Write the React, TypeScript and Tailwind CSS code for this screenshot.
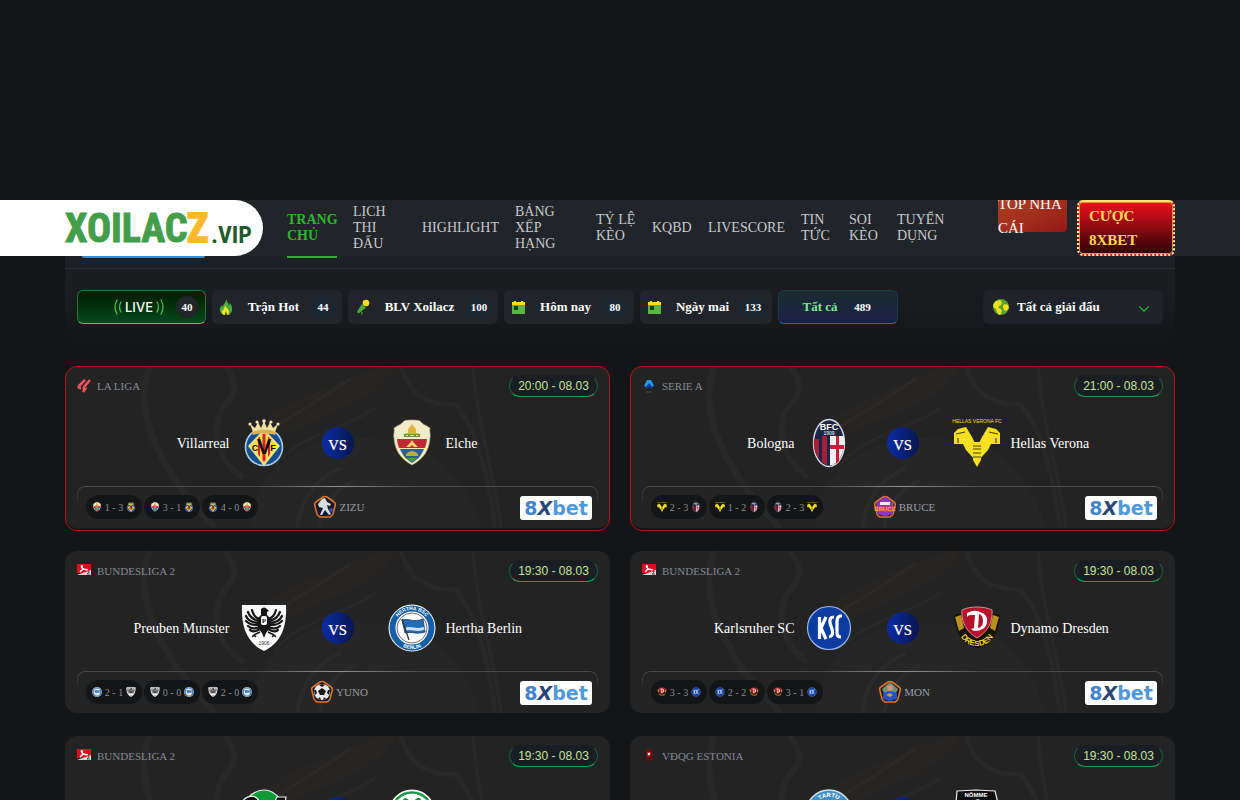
import React from "react";
import { ChevronDown } from "lucide-react";

type TeamKey =
  | "villarreal"
  | "elche"
  | "bologna"
  | "verona"
  | "preuben"
  | "hertha"
  | "karlsruher"
  | "dresden"
  | "hannover"
  | "furth"
  | "tartu"
  | "kalju";

type LeagueKey = "laliga" | "seriea" | "bundesliga" | "estonia";

interface Head2Head {
  left: TeamKey;
  score: string;
  right: TeamKey;
}

interface Match {
  league: string;
  leagueKey: LeagueKey;
  time: string;
  home: string;
  homeKey: TeamKey;
  away: string;
  awayKey: TeamKey;
  commentator: string;
  hot?: boolean;
  h2h: Head2Head[];
}

const navItems = [
  { label: "Trang chủ", width: "w-[50px]", active: true },
  { label: "Lịch thi đấu", width: "w-[53px]" },
  { label: "Highlight", width: "w-[77px]" },
  { label: "Bảng xếp hạng", width: "w-[65px]" },
  { label: "Tỷ lệ kèo", width: "w-10" },
  { label: "KQBD", width: "w-10" },
  { label: "Livescore", width: "w-[77px]" },
  { label: "Tin tức", width: "w-8" },
  { label: "Soi kèo", width: "w-8" },
  { label: "Tuyển dụng", width: "w-[53px]" },
];

const matches: Match[] = [
  {
    league: "LA LIGA",
    leagueKey: "laliga",
    time: "20:00 - 08.03",
    home: "Villarreal",
    homeKey: "villarreal",
    away: "Elche",
    awayKey: "elche",
    commentator: "ZIZU",
    hot: true,
    h2h: [
      { left: "elche", score: "1 - 3", right: "villarreal" },
      { left: "elche", score: "3 - 1", right: "villarreal" },
      { left: "villarreal", score: "4 - 0", right: "elche" },
    ],
  },
  {
    league: "SERIE A",
    leagueKey: "seriea",
    time: "21:00 - 08.03",
    home: "Bologna",
    homeKey: "bologna",
    away: "Hellas Verona",
    awayKey: "verona",
    commentator: "BRUCE",
    hot: true,
    h2h: [
      { left: "verona", score: "2 - 3", right: "bologna" },
      { left: "verona", score: "1 - 2", right: "bologna" },
      { left: "bologna", score: "2 - 3", right: "verona" },
    ],
  },
  {
    league: "BUNDESLIGA 2",
    leagueKey: "bundesliga",
    time: "19:30 - 08.03",
    home: "Preuben Munster",
    homeKey: "preuben",
    away: "Hertha Berlin",
    awayKey: "hertha",
    commentator: "YUNO",
    h2h: [
      { left: "hertha", score: "2 - 1", right: "preuben" },
      { left: "preuben", score: "0 - 0", right: "hertha" },
      { left: "preuben", score: "2 - 0", right: "hertha" },
    ],
  },
  {
    league: "BUNDESLIGA 2",
    leagueKey: "bundesliga",
    time: "19:30 - 08.03",
    home: "Karlsruher SC",
    homeKey: "karlsruher",
    away: "Dynamo Dresden",
    awayKey: "dresden",
    commentator: "MON",
    h2h: [
      { left: "dresden", score: "3 - 3", right: "karlsruher" },
      { left: "karlsruher", score: "2 - 2", right: "dresden" },
      { left: "dresden", score: "3 - 1", right: "karlsruher" },
    ],
  },
  {
    league: "BUNDESLIGA 2",
    leagueKey: "bundesliga",
    time: "19:30 - 08.03",
    home: "Hannover 96",
    homeKey: "hannover",
    away: "Greuther Furth",
    awayKey: "furth",
    commentator: "YUNO",
    h2h: [],
  },
  {
    league: "VĐQG ESTONIA",
    leagueKey: "estonia",
    time: "19:30 - 08.03",
    home: "Tartu Tammeka",
    homeKey: "tartu",
    away: "Nomme Kalju",
    awayKey: "kalju",
    commentator: "MON",
    h2h: [],
  },
];

// Club crests, all drawn on a 48x48 board
const crests: Record<TeamKey, React.ReactNode> = {
  villarreal: (
    <>
      <circle cx="24" cy="28" r="18.500" fill="#14508f" stroke="#a9c9e4" strokeWidth="1.600" />
      <path d="M24 10 40 27 24 47 8 27Z" fill="#f6e08a" />
      <path d="M24 12 37 27 24 44 11 27Z" fill="#fbd94a" />
      <path d="M18 19v16l2 3V18zM22.500 15v26l1.500 2 1.500-2V15zM28 18v20l2-3V19z" fill="#d2232f" />
      <path d="M12 13c6-3 18-3 24 0l-1 3c-6-2-16-2-22 0z" fill="#d9b24a" />
      <path d="M13 13L10 5l5 4 3-6 3 6 3-7 3 7 3-6 3 6 5-4-3 8c-6-3-16-3-22 0z" fill="#efe09c" />
      <g fill="#f5eab4">
        <circle cx="10" cy="5" r="1.600" />
        <circle cx="17" cy="3" r="1.600" />
        <circle cx="24" cy="2" r="1.800" />
        <circle cx="31" cy="3" r="1.600" />
        <circle cx="38" cy="5" r="1.600" />
      </g>
      <g fontFamily="Liberation Sans, sans-serif" fontWeight="700" fill="#101010" textAnchor="middle">
        <text x="24" y="35" fontSize="22">V</text>
        <text x="15" y="32" fontSize="9">C</text>
        <text x="33" y="32" fontSize="9">F</text>
      </g>
    </>
  ),
  elche: (
    <>
      <path d="M24 1c3 0 6 0 8 1 3 4 6 4 10 7-1 4 1 6 0 10-1 13-7 21-18 27C13 40 7 32 6 19 5 15 7 13 6 9c4-3 7-3 10-7 2-1 5-1 8-1z" fill="#f1ebca" stroke="#b8a878" strokeWidth="0.600" />
      <path d="M17 14h3v-4l4-5 4 5v4h3v2H17z" fill="#dcb43a" />
      <path d="M16 15h16v3H16z" fill="#7a8c3c" />
      <path d="M18 16h2v1h-2zM22 16h4v1h-4zM28 16h2v1h-2z" fill="#e8dfa0" />
      <path d="M9 20h30c0 3-1 6-2 9H11c-1-3-2-6-2-9z" fill="#c22a33" />
      <path d="M12 30h24c-3 7-6 10-12 14-6-4-9-7-12-14z" fill="#2e5c94" />
      <path d="M24 21l2 3 4 4h-4l-2-2-2 2h-4l4-4z" fill="#efcf6e" />
      <path d="M18 35q6-6 12 0v2H18z" fill="#b5b03a" />
      <path d="M19 39h10l-5 4z" fill="#4d9a4a" />
    </>
  ),
  bologna: (
    <>
      <ellipse cx="24" cy="24" rx="15.500" ry="23.500" fill="#1d2745" stroke="#d9dce4" strokeWidth="1.400" />
      <path d="M9 20h5v20c-4-5-6-12-5-20z" fill="#a61f38" />
      <path d="M17 17h5v29l-5-3z" fill="#a61f38" />
      <path d="M25 17h14c1 12-2 24-11 29h-3z" fill="#f2f2f4" />
      <path d="M31 17h3v25l-3 3z" fill="#c5203a" />
      <path d="M25 26h14v4H25z" fill="#c5203a" />
      <text x="24" y="11" textAnchor="middle" fontSize="9" fontWeight="700" fontFamily="Liberation Sans, sans-serif" fill="#fff">BFC</text>
      <text x="24" y="16" textAnchor="middle" fontSize="5" fontFamily="Liberation Sans, sans-serif" fill="#fff">1909</text>
    </>
  ),
  verona: (
    <>
      <text x="24" y="4" textAnchor="middle" fontSize="5" fontFamily="Liberation Sans, sans-serif" fill="#f4dc22">HELLAS VERONA FC</text>
      <path d="M13 8l6 10 3 6v17l-9-10-3-6H1V14l4-4z" fill="#f6e01f" />
      <path d="M35 8l-6 10-3 6v17l9-10 3-6h9V14l-4-4z" fill="#f6e01f" />
      <path d="M20 23h8v18l-4 7-4-7z" fill="#f6e01f" />
      <path d="M20 27h8M20 30h8M20 34h8M20 38h8M3 15l9-2M36 13l9 2M5 19v5M43 19v5" stroke="#4a4410" strokeWidth="1.200" />
    </>
  ),
  preuben: (
    <>
      <path d="M2 1h44c1 22-5 38-22 46C7 39 1 23 2 1z" fill="#fbfbfb" />
      {/* eagle: body, feathers, talons */}
      <path d="M21 5q3-3 6 0l2 2-2 1v3l3 3q2 9-4 15l-2 5-2-5q-6-6-4-15l3-3V8z" fill="#161616" />
      <g fill="none" stroke="#161616" strokeWidth="2.200" strokeLinecap="round">
        <path d="M20 15Q14 14 12 6M20 17Q11 16 8 8M20 19Q9 19 6 12M20 21Q11 22 6 17M20 23Q12 26 8 22M20 25Q14 29 10 26" />
        <path d="M28 15Q34 14 36 6M28 17Q37 16 40 8M28 19Q39 19 42 12M28 21Q37 22 42 17M28 23Q36 26 40 22M28 25Q34 29 38 26" />
      </g>
      <path d="M20 28l-6 3M28 28l6 3M14 31l-2 2M14 31l2 2M34 31l2 2M34 31l-2 2" stroke="#161616" strokeWidth="1.600" />
      <rect x="21" y="12" width="6" height="9" rx="2" fill="#fff" />
      <text x="24" y="19" textAnchor="middle" fontSize="7" fontWeight="700" fontFamily="Liberation Serif, serif" fill="#161616">P</text>
      <text x="24" y="41" textAnchor="middle" fontSize="5" fontFamily="Liberation Sans, sans-serif" fill="#333">1906</text>
    </>
  ),
  hertha: (
    <>
      <circle cx="24" cy="24" r="23.500" fill="#fff" />
      <circle cx="24" cy="24" r="19.500" fill="none" stroke="#135fa8" strokeWidth="6" />
      <path id="hertha-top" d="M6 24a18 18 0 0 1 36 0" fill="none" />
      <path id="hertha-bottom" d="M3 24a21 21 0 0 0 42 0" fill="none" />
      <text fontSize="5" fontWeight="700" fontFamily="Liberation Sans, sans-serif" fill="#fff">
        <textPath href="#hertha-top" startOffset="50%" textAnchor="middle">HERTHA BSC</textPath>
      </text>
      <text fontSize="5" fontWeight="700" fontFamily="Liberation Sans, sans-serif" fill="#fff">
        <textPath href="#hertha-bottom" startOffset="50%" textAnchor="middle">BERLIN</textPath>
      </text>
      <circle cx="24" cy="24" r="15" fill="none" stroke="#444" strokeWidth="0.800" />
      <path d="M14 16c7-2 11 3 21-1l2 13c-9 3-12-1-20 1z" fill="#1f6db6" stroke="#183f66" strokeWidth="0.800" />
      <path d="M18 25c7-2 11 3 18-1" stroke="#cfe0f2" strokeWidth="3" fill="none" />
      <path d="M14 15l7 21" stroke="#333" strokeWidth="1.300" />
    </>
  ),
  karlsruher: (
    <>
      <circle cx="24" cy="24" r="21.500" fill="#0b3da0" stroke="#9db9ee" strokeWidth="1.200" />
      <g fill="none" stroke="#fff" strokeWidth="3.200">
        <path d="M14.500 13v22M21 13l-5 11 5 11" />
        <path d="M29 13q-5 0-4 6l2 6q2 7-3 8" />
        <path d="M37 12h-2q-3 1-3 5v12q0 4 4 4" />
      </g>
    </>
  ),
  dresden: (
    <>
      <path d="M1 11l8-2 3 14 12 8 12-8 3-14 8 2c-1 17-7 26-16 31q-7 4-14 0C8 37 2 28 1 11z" fill="#171310" />
      <path d="M2 13l6-2 3 13-5 3zM46 13l-6-2-3 13 5 3z" fill="#b98f1e" />
      <path d="M24 3c6 0 11 1 15 3 1 13-5 22-15 28C14 28 8 19 9 6c4-2 9-3 15-3z" fill="#b3122a" stroke="#e8868f" strokeWidth="1" />
      <path d="M14 9q8-4 13-1 9 3 7 11-2 8-13 8l-3-2 3-1 1-13h-4q-3 0-4 2zM26 10l-1 14q5-1 5-7t-4-7z" fill="#fff" fillRule="evenodd" />
      <path id="dresden-arc" d="M4 23q5 19 20 19t20-19" fill="none" />
      <text fontSize="8" fontWeight="700" fontFamily="Liberation Sans, sans-serif" fill="#e9cf2f">
        <textPath href="#dresden-arc" startOffset="50%" textAnchor="middle">DRESDEN</textPath>
      </text>
    </>
  ),
  hannover: (
    <>
      <path d="M8 9q7-8 16-8t16 9l-4 20H10z" fill="#0f9a36" stroke="#e5e9e5" strokeWidth="1.200" />
      <path d="M2 14c3-8 14-9 17-2l4 6 10-2 4-8h9L40 44H6z" fill="#0c0c0c" stroke="#f2f2f2" strokeWidth="1.200" />
    </>
  ),
  furth: (
    <>
      <circle cx="24" cy="24" r="23.500" fill="#fff" />
      <circle cx="24" cy="24" r="20.500" fill="none" stroke="#1f9a4a" strokeWidth="2.500" />
      <path d="M24 16c-2-6-8-9-9-5s4 8 9 8c5 0 10-3 9-8s-7-1-9 5zM24 24c-9 0-12 9-6 10s6-4 6-10c0 6 0 11 6 10s3-10-6-10z" fill="#128a3c" />
    </>
  ),
  tartu: (
    <>
      <circle cx="24" cy="24" r="23" fill="#3f8fc6" stroke="#cfe3f1" strokeWidth="1.400" />
      <path id="tartu-arc" d="M8 24a16 16 0 0 1 32 0" fill="none" />
      <text fontSize="6" fontWeight="700" fontFamily="Liberation Sans, sans-serif" fill="#fff">
        <textPath href="#tartu-arc" startOffset="50%" textAnchor="middle">TARTU</textPath>
      </text>
      <circle cx="24" cy="26" r="13" fill="#fff" />
    </>
  ),
  kalju: (
    <>
      <path d="M4 2l19-1 19 1 3 12-8 29H11L3 14z" fill="#0e0e0e" stroke="#ececec" strokeWidth="1.200" />
      <text x="23" y="8" textAnchor="middle" fontSize="6" fontWeight="700" fontFamily="Liberation Sans, sans-serif" fill="#fff">NÕMME</text>
      <path d="M7 16l18-6 18 8-6 22H13z" fill="#d7d7d7" />
      <path d="M12 20l12-4 8 6-10 12z" fill="#111" />
    </>
  ),
};

const Crest = ({ team, className }: { team: TeamKey; className: string }) => (
  <svg viewBox="0 0 48 48" className={`overflow-visible ${className}`} aria-hidden="true">
    {crests[team]}
  </svg>
);

const leagueIcons: Record<LeagueKey, React.ReactNode> = {
  laliga: (
    <g fill="none" stroke="#f4555b" strokeWidth="2.600">
      <path d="M8 1L2 7q-1 2 1 2h1" />
      <path d="M13 1L7 8q-1 2 1 2l-2 3" />
    </g>
  ),
  seriea: (
    <>
      <path d="M5 1h4l3 6-3 1H5L2 7z" fill="#1e9bea" />
      <path d="M7 4l4 5H3z" fill="#0b3c9c" />
      <path d="M4 13h6" stroke="#666" strokeWidth="0.600" />
    </>
  ),
  bundesliga: (
    <>
      <path d="M0 0h14v9H0z" fill="#d9101e" />
      <path d="M0 11l14-5v5z" fill="#d8d8d8" />
      <path d="M4 2l2 3 5 1M6 5L3 8" stroke="#fff" strokeWidth="1.400" fill="none" />
      <circle cx="5" cy="2" r="1" fill="#fff" />
      <path d="M10 7h2v1l-2 2h3" stroke="#333" strokeWidth="0.800" fill="none" />
    </>
  ),
  estonia: (
    <>
      <path d="M4 0h7v10l-4 3-3-3z" fill="#5c1217" />
      <path d="M5 3h4l-1 4-1 1-2-2z" fill="#b83038" />
      <path d="M6 4h2v2H6z" fill="#eee" />
    </>
  ),
};

const commentators: Record<string, React.ReactNode> = {
  ZIZU: (
    <>
      <path d="M9 4l3-1 2 4 4 2-1 2-3-1 1 4 3 5-2 1-4-5-3 5H7l3-7-4-1-1-3z" fill="#d9dcdf" />
      <circle cx="18" cy="15" r="2" fill="#2c4fb0" />
    </>
  ),
  BRUCE: (
    <>
      <path d="M12 2l9 6-2 11q-7 4-14 0L3 8z" fill="#8737c4" />
      <path d="M7 7h10v3H7z" fill="#efe6f6" />
      <path d="M3 11h18l-1 6H4z" fill="#c8387c" />
      <text x="12" y="16" textAnchor="middle" fontSize="6" fontWeight="700" fontFamily="Liberation Sans, sans-serif" fill="#ffa540">BRUCE</text>
    </>
  ),
  YUNO: (
    <>
      <circle cx="12" cy="12" r="8" fill="#e9e9e9" />
      <path d="M12 8l4 3-2 4h-4l-2-4zM12 4l3 1-3 2-3-2zM20 10l-1 5-2-2 1-3zM4 10l1 5 2-2-1-3zM8 19l2-2 1 3zM16 19l-2-2-1 3z" fill="#161616" />
    </>
  ),
  MON: (
    <>
      <path d="M4 9l8-7 8 7-2 4H6z" fill="#6f8f74" />
      <circle cx="12" cy="8" r="3" fill="#c99576" />
      <path d="M5 19l0-6 7-2 7 2 0 6-7 2z" fill="#2352c8" />
      <path d="M8 15l4-2 3 2-3 2z" fill="#c99576" />
    </>
  ),
};

const FlameIcon = () => (
  <svg viewBox="0 0 16 16" className="size-4 shrink-0" aria-hidden="true">
    <path d="M7 0c1 3 3 4 3 7l1-3c3 4 3 9-1 12H4C0 13 0 9 3 6l1 2c0-3 3-4 3-8z" fill="#4aa83c" />
    <path d="M6 6c1 3 4 4 4 7 0 2-1 3-3 3-3 0-5-2-4-5l1 1c0-2 2-3 2-6z" fill="#f5e620" />
    <path d="M7 12l1 4H6z" fill="#23262c" />
  </svg>
);

const MicIcon = () => (
  <svg viewBox="0 0 16 16" className="size-4 shrink-0" aria-hidden="true">
    <circle cx="11" cy="4" r="3.300" fill="#f7df1e" />
    <path d="M7 5l4 4-6 4-2 1-1-1 1-2z" fill="#4fa53e" />
    <path d="M3 14q3-2 4-1t-1 3" stroke="#4fa53e" fill="none" />
  </svg>
);

const CalendarIcon = () => (
  <svg viewBox="0 0 16 16" className="size-4 shrink-0" aria-hidden="true">
    <path d="M1 3h2V2h2v1h5V2h2v1h2v3H1z" fill="#f7df1e" />
    <path d="M1 6h13v9H1z" fill="#5bb446" />
    <path d="M3 7h4v4H3z" fill="#20421c" />
  </svg>
);

const GlobeIcon = () => (
  <svg viewBox="0 0 16 16" className="size-4" aria-hidden="true">
    <circle cx="8" cy="8" r="8" fill="#5a9d33" />
    <path d="M3 2l4-1 2 2-1 3-3 2 2 2 2 1-1 4-2 1-2-3-1-3-3-2q0-4 3-6zM10 6l3-1 2 1 1 3-3 3-2-1-1-3z" fill="#f0e11c" />
  </svg>
);

const LiveIcon = () => (
  <svg viewBox="0 0 50 20" className="h-5 w-[50px] overflow-visible" role="img" aria-label="Live">
    <g fill="none" stroke="#45b455" strokeWidth="1.400" strokeLinecap="round">
      <path d="M3 3q-4 7 0 14M7 5q-3 5 0 10M47 3q4 7 0 14M43 5q3 5 0 10" />
    </g>
    <text x="25" y="15" textAnchor="middle" fontSize="13" fontWeight="500" fontFamily="Inter, sans-serif" fill="#fff">
      LIVE
    </text>
  </svg>
);

const Logo = () => (
  <svg viewBox="0 0 190 44" className="h-11 w-[190px] overflow-visible" role="img" aria-label="Xoilacz.vip">
    <g fontFamily="'Liberation Sans Narrow', 'Roboto Condensed', 'DejaVu Sans Condensed', sans-serif" fontWeight="700">
      <text x="0" y="36" fontSize="40" fill="#449e49" stroke="#449e49">XOILAC</text>
      <text x="122" y="36" fontSize="40" fill="#fdb92b" stroke="#fdb92b" strokeWidth="2">Z</text>
      <text x="146" y="37" fontSize="24" fill="#215b2c">.VIP</text>
    </g>
  </svg>
);

const CountBadge = ({ value, live }: { value: number; live?: boolean }) => (
  <span
    className={`flex h-[22px] min-w-[22px] items-center justify-center rounded-full text-[11px] font-bold text-white ${
      live ? "bg-[#222629]" : "bg-[#1a2733]"
    }`}
  >
    {value}
  </span>
);

const filters = [
  { label: "Trận Hot", count: 44, icon: <FlameIcon />, width: "w-[130px]" },
  { label: "BLV Xoilacz", count: 100, icon: <MicIcon />, width: "w-[150px]" },
  { label: "Hôm nay", count: 80, icon: <CalendarIcon />, width: "w-[130px]" },
  { label: "Ngày mai", count: 133, icon: <CalendarIcon />, width: "w-[132px]" },
];

const Header = () => (
  <header className="relative flex h-14 items-center bg-[#212428] pr-[65px]">
    <a href="#home" className="flex h-14 w-[263px] shrink-0 items-center rounded-r-full bg-white pl-[65px]">
      <Logo />
    </a>
    <nav className="flex h-14 gap-4 pl-6">
      {navItems.map((item) => (
        <a
          key={item.label}
          href="#nav"
          className={`flex shrink-0 items-center text-sm leading-4 uppercase ${item.width} ${
            item.active
              ? "font-bold text-[#2db52d] shadow-[0_2px_0_#3aab35]"
              : "text-[#c8c9ca]"
          }`}
        >
          {item.label}
        </a>
      ))}
    </nav>
    <div className="ml-auto flex h-14 gap-[10px]">
      <a
        href="#top"
        className="flex h-8 w-[69px] items-center rounded-b-sm bg-linear-to-br from-[#ad4024] to-[#961616] text-[15px] leading-6 text-white"
      >
        TOP NHÀ CÁI
      </a>
      <a
        href="#bet"
        className="flex h-14 w-[98px] items-center rounded-md border-2 border-dotted border-[#fff0c0] bg-linear-to-b from-[#f00d1b] to-[#2e0306] pl-[10px] text-[15px] leading-6 font-bold text-[#ffd75a] shadow-[inset_0_0_0_1px_#d9912e] [border-top-color:#ffe27a] [border-top-style:solid]"
      >
        CƯỢC 8XBET
      </a>
    </div>
  </header>
);

const FilterPanel = () => (
  <section className="mx-[65px] bg-linear-to-b from-[#1e2025] to-[#131517]">
    <div className="h-[13px] border-b border-[#2c2e33] px-[17px]">
      <div className="h-[2px] w-[123px] rounded-b-sm bg-[#2b8fe0]" />
    </div>
    <div className="flex items-center gap-[6px] px-3 pt-[21px] pb-[26px] text-[13px] font-bold text-white">
      <button
        type="button"
        className="flex h-[34px] w-[129px] items-center justify-end gap-3 rounded-md border border-[#1f7a45] border-b-[#4fc07a] bg-linear-to-b from-[#021b02] to-[#054a1c] pr-[7px]"
      >
        <LiveIcon />
        <CountBadge value={40} live />
      </button>
      {filters.map((filter) => (
        <button
          key={filter.label}
          type="button"
          className={`flex h-[34px] items-center rounded-md bg-[#212429] pr-2 pl-[7px] ${filter.width}`}
        >
          {filter.icon}
          <span className="flex-1 text-center">{filter.label}</span>
          <CountBadge value={filter.count} />
        </button>
      ))}
      <button
        type="button"
        className="flex h-[34px] w-[120px] items-center justify-center gap-[14px] rounded-md border border-[#1b3a4a] border-b-[#1a6c9c] bg-linear-to-b from-[#182c30] to-[#1b2046] text-[#7ee68f]"
      >
        Tất cả
        <span className="min-w-[22px] text-[11px] text-white">489</span>
      </button>
      <div className="relative ml-auto w-[180px]">
        <select
          aria-label="Giải đấu"
          className="h-[34px] w-full appearance-none rounded-md bg-[#1f2228] pl-[34px] text-[13px] font-bold text-white"
        >
          <option>Tất cả giải đấu</option>
        </select>
        <span className="pointer-events-none absolute top-[9px] left-[10px]">
          <GlobeIcon />
        </span>
        <ChevronDown
          strokeWidth={1.5}
          className="pointer-events-none absolute top-[10px] right-[10px] size-[18px] text-[#16b83e]"
        />
      </div>
    </div>
  </section>
);

// Faint player artwork behind each card
const CardArtwork = () => (
  <svg
    viewBox="0 0 545 162"
    preserveAspectRatio="none"
    className="absolute inset-0 size-full"
    aria-hidden="true"
  >
    <g fill="none" stroke="#ffffff" strokeOpacity="0.022">
      <path d="M85 0C76 20 76 50 94 86s30 46 56 76" strokeWidth="7" />
      <path d="M160 0c8 10 14 22 4 34-14 14-16 34-6 56 6 12 14 16 20 22" strokeWidth="6" />
      <path d="M336 0c8 30 30 40 54 38 20 22 34 70 40 124" strokeWidth="5" />
      <path d="M408 0c4 60 22 110 28 162" strokeWidth="4" />
      <path d="M196 70c30-20 60-36 90-58M210 100c20-30 70-36 100-58" strokeWidth="3" />
      <path d="M232 162c4-30 20-50 44-60M254 162c4-24 16-38 36-48" strokeWidth="4" />
    </g>
    <path d="M190 60C230 30 270 20 316 0h14c-20 40-80 50-130 78z" fill="#a08050" fillOpacity="0.025" />
    <path d="M186 162c0-50 40-90 110-90s100 30 120 90z" fill="#fff" fillOpacity="0.015" />
  </svg>
);

const MatchCard = ({ match }: { match: Match }) => (
  <article className="relative h-[162px] rounded-xl bg-[#232323] px-3 pt-[9px]">
    <CardArtwork />
    {match.hot && (
      <div className="pointer-events-none absolute inset-x-0 top-0 -bottom-[3px] rounded-xl border border-[#b01217]" />
    )}
    <div className="relative flex h-[22px] items-center justify-between">
      <div className="flex items-center gap-[6px] text-[11px] text-[#868b94]">
        <svg viewBox="0 0 14 14" className="size-[14px]" aria-hidden="true">
          {leagueIcons[match.leagueKey]}
        </svg>
        <span>{match.league}</span>
      </div>
      <time className="flex h-[22px] w-[89px] items-center justify-center rounded-full border border-t-transparent border-x-[#1d5a3a] border-b-[#1f9c55] bg-[#1a1e22] font-['Liberation_Sans',sans-serif] text-xs text-[#c5e39a]">
        {match.time}
      </time>
    </div>
    <div className="relative mt-[22px] grid h-12 grid-cols-[1fr_auto_1fr] items-center text-sm text-white">
      <div className="flex items-center justify-end gap-[10px]">
        <span className="pt-px">{match.home}</span>
        <Crest team={match.homeKey} className="size-12 shrink-0" />
      </div>
      <span className="mx-[34px] flex size-8 items-center justify-center rounded-full bg-linear-to-r from-[#0a2da8] to-[#07164f] text-[21px] leading-5">
        vs
      </span>
      <div className="flex items-center gap-[10px]">
        <Crest team={match.awayKey} className="size-12 shrink-0" />
        <span className="pt-px">{match.away}</span>
      </div>
    </div>
    <div className="relative mt-[19px] grid h-[42px] grid-cols-[1fr_auto_1fr] items-start pt-[9px] pr-[6px] pl-[9px]">
      <div className="absolute inset-0 rounded-t-lg border border-b-0 border-[#4a4e4e] [mask-image:linear-gradient(to_bottom,black,transparent_18px)]" />
      <div className="absolute inset-x-[180px] top-0 h-px bg-linear-to-r from-transparent via-[#8f9391] to-transparent" />
      <div className="relative flex gap-[2px] text-[10px] text-[#8b8e94]">
        {match.h2h.map((game, index) => (
          <div key={index} className="flex h-6 w-14 shrink-0 items-center justify-center gap-[3px] rounded-full bg-[#131516]">
            <Crest team={game.left} className="size-[10px]" />
            <span>{game.score}</span>
            <Crest team={game.right} className="size-[10px]" />
          </div>
        ))}
      </div>
      <div className="relative flex h-6 items-center gap-[2px] text-[11px] text-[#9c9fa3]">
        <svg viewBox="0 0 24 24" className="size-6" aria-hidden="true">
          <path d="M10 2q2-1 4 0l7 5q2 1 1 4l-2 8q-1 2-3 3H7q-2-1-3-3L2 11q-1-3 1-4z" fill="#15182c" stroke="#df7426" strokeWidth="1.600" />
          {commentators[match.commentator]}
        </svg>
        <span>{match.commentator}</span>
      </div>
      <a
        href="#8xbet"
        className="relative mt-px flex h-6 w-[72px] items-center justify-center justify-self-end rounded-[3px] bg-white font-['DejaVu_Sans',sans-serif] text-[19px] leading-6 font-bold text-[#5098d8]"
      >
        <span className="text-[#4484cc]">8</span>
        <span className="text-[#2c4576] italic">X</span>
        bet
      </a>
    </div>
  </article>
);

const App = () => {
  return (
    <div className="min-h-screen bg-[#131517] font-['Liberation_Serif','Times_New_Roman',serif]">
      {/* Banner slot, sits above the header */}
      <div className="relative z-10 h-[200px] bg-[#141617]" />
      <Header />
      <FilterPanel />
      <main className="grid grid-cols-2 gap-x-5 gap-y-[23px] px-[65px] pt-4">
        {matches.map((match, index) => (
          <MatchCard key={index} match={match} />
        ))}
      </main>
    </div>
  );
};

export default App;
